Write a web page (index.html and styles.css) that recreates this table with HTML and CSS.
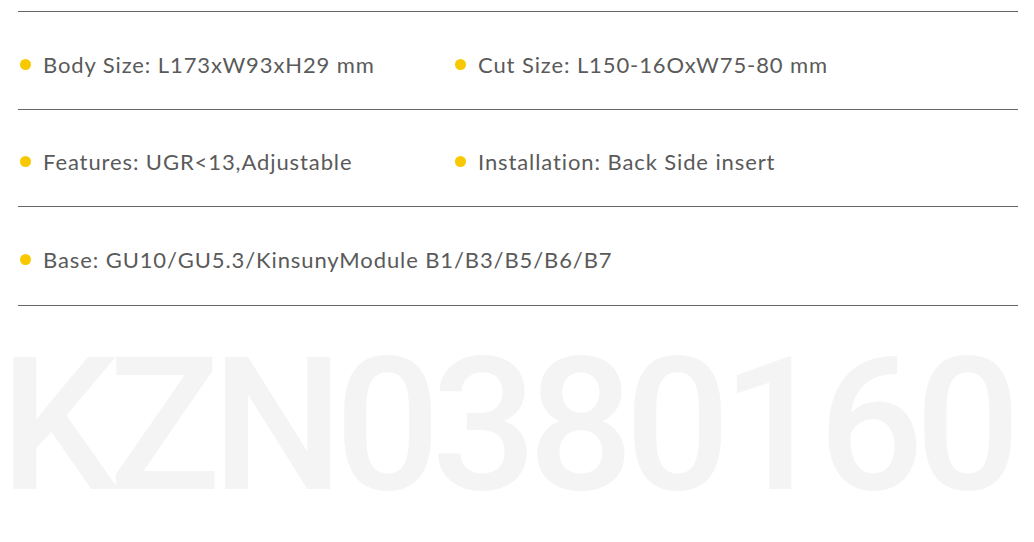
FILE: index.html
```html
<!DOCTYPE html>
<html lang="en">

<head>
   <meta charset="UTF-8">
   <meta name="viewport" content="width=device-width, initial-scale=1.0">
   <title>KZN0380160</title>
   <link rel="stylesheet" href="styles.css">
</head>

<body>
   <div class="specs">
       <div class="spec-row">
           <div class="spec-item">Body Size: L173xW93xH29 mm</div>
           <div class="spec-item">Cut Size: L150-16OxW75-80 mm</div>
       </div>
       <div class="spec-row">
           <div class="spec-item">Features: UGR&lt;13,Adjustable</div>
           <div class="spec-item">Installation: Back Side insert</div>
       </div>
       <div class="spec-row">
           <div class="spec-item wide">Base: GU10/GU5.3/KinsunyModule B1/B3/B5/B6/B7</div>
       </div>
   </div>

   <div class="model-name">KZN0380160</div>
</body>

</html>
```

FILE: styles.css
```css
body {
    margin: 0;
    background-color: #fff;
    font-family: Lato, "Open Sans", sans-serif;
    overflow: hidden;
}

.specs {
    width: 1000px;
    margin-left: 18px;
    padding-top: 11px;
}

.spec-row {
    display: flex;
    align-items: center;
    height: 98px;
    padding-top: 7px;
    box-sizing: border-box;
    border-top: 1px solid #666;
}

.spec-row:nth-child(2) {
    height: 97px;
}

.spec-row:last-child {
    height: 100px;
    border-bottom: 1px solid #666;
}

.spec-item {
    width: 433px;
    display: flex;
    align-items: center;
    gap: 12px;
    padding-left: 2px;
    font-size: 22px;
    letter-spacing: 0.9px;
    color: #5a5a5a;
    white-space: nowrap;
}

.spec-item.wide {
    width: auto;
}

.spec-item::before {
    content: "";
    width: 11px;
    height: 11px;
    border-radius: 50%;
    background-color: #f8c800; /* yellow bullet */
    flex-shrink: 0;
}

/* big grey model number in the background */
.model-name {
    margin-top: 26px;
    font-family: Roboto, sans-serif;
    font-weight: 500;
    font-size: 186px;
    line-height: 1;
    letter-spacing: -9px;
    color: #f4f4f4;
    white-space: nowrap;
}
```
